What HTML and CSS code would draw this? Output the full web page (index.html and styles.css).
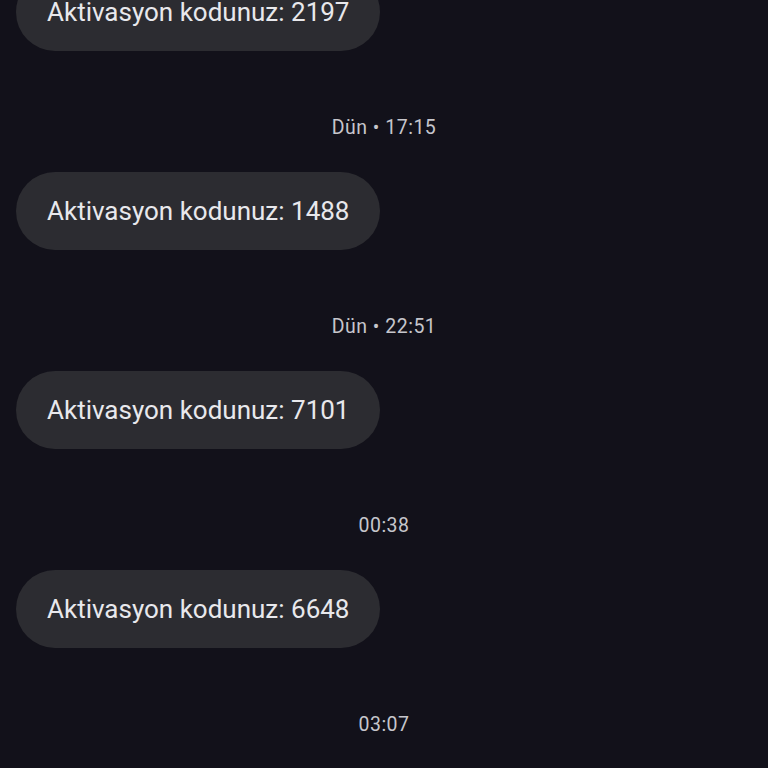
FILE: index.html
```html
<!DOCTYPE html>
<html lang="tr">
<head>
    <meta charset="UTF-8">
    <meta name="viewport" content="width=device-width, initial-scale=1.0">
    <title>Mesajlar</title>
    <link rel="stylesheet" href="styles.css">
</head>
<body>
    <div class="thread">
        <div class="msg">Aktivasyon kodunuz: 2197</div>
        <div class="time">Dün • 17:15</div>
        <div class="msg">Aktivasyon kodunuz: 1488</div>
        <div class="time">Dün • 22:51</div>
        <div class="msg">Aktivasyon kodunuz: 7101</div>
        <div class="time">00:38</div>
        <div class="msg">Aktivasyon kodunuz: 6648</div>
        <div class="time">03:07</div>
    </div>
</body>
</html>
```

FILE: styles.css
```css
html, body {
    margin: 0;
    height: 100%;
    overflow: hidden;
    background-color: #12111a;
}
body {
    font-family: Roboto, "Noto Sans", sans-serif;
}
.thread {
    display: flex;
    flex-direction: column;
    align-items: flex-start;
    margin-top: -27px;
    padding: 0 16px;
}
.msg {
    box-sizing: border-box;
    height: 78px;
    line-height: 78px;
    padding: 0 31px;
    border-radius: 39px;
    background-color: #2c2c31;
    color: #e8e8ec;
    font-size: 26px;
}
.time {
    align-self: stretch;
    text-align: center;
    margin: 65px 0 32px;
    line-height: 24px;
    font-size: 19.5px;
    letter-spacing: 0.5px;
    color: #c6c6cc;
}
```
